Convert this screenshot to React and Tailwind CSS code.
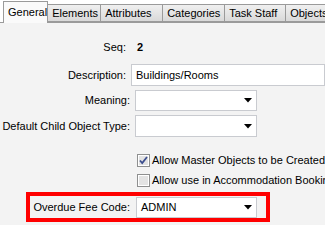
import React from "react";

const tabs = ["Elements", "Attributes", "Categories", "Task Staff", "Objects"];
const tabWidths = ["w-[53px]", "w-[62px]", "w-[62px]", "w-[61px]", "w-[50px]"];

function Arrow() {
  return (
    <svg width="8" height="5" viewBox="0 0 8 5" className="shrink-0">
      <path d="M0 0h8L4 4.5z" fill="#000" />
    </svg>
  );
}

function Select({ value, className }) {
  return (
    <div
      className={`flex h-full items-center justify-between border border-[#c9cbd0] bg-white pl-[4px] pr-[4px] ${className}`}
    >
      <span>{value}</span>
      <Arrow />
    </div>
  );
}

function Checkbox({ checked }) {
  return (
    <svg width="13" height="13" viewBox="0 0 13 13" className="shrink-0">
      <rect x="0.5" y="0.5" width="12" height="12" fill="#fff" stroke="#8e8f8f" />
      <rect x="2" y="2" width="9" height="9" fill="#e3e3e3" />
      {checked && (
        <path d="M3 6.5l2.2 2.5L10 3" fill="none" stroke="#3d4f8f" strokeWidth="1.8" />
      )}
    </svg>
  );
}

export default function App() {
  return (
    <div className="relative h-[225px] w-[325px] overflow-hidden bg-white text-[11px] leading-none text-black [font-family:'Liberation_Sans',Arial,sans-serif]">
      {/* tab strip */}
      <div className="flex h-[22px] items-end pl-[3px]">
        <div className="z-10 -mb-px flex h-[22px] w-[49px] items-start border border-b-0 border-[#9a9a9a] bg-[#fafafa] pl-[4px] pt-[5px]">
          General
        </div>
        {tabs.map((t, i) => (
          <div
            key={t}
            className={`flex h-[18px] shrink-0 items-center border border-l-0 border-[#9a9a9a] bg-gradient-to-b from-[#f0f0f0] to-[#d9d9d9] pl-[4px] ${tabWidths[i]}`}
          >
            <span className="whitespace-nowrap">{t}</span>
          </div>
        ))}
      </div>

      {/* content */}
      <div className="h-[203px] border-t border-[#9a9a9a] bg-[#f3f3f3] pt-[17px]">
        <div className="flex h-[14px] items-center">
          <span className="w-[126px] text-right">Seq:</span>
          <span className="ml-[11px] font-bold">2</span>
        </div>

        <div className="mt-[10px] flex h-[22px] items-center">
          <span className="w-[130px] text-right">Description:</span>
          <div className="ml-[5px] flex h-full w-[200px] items-center border border-[#c9cbd0] bg-white pl-[4px]">
            Buildings/Rooms
          </div>
        </div>

        <div className="mt-[4px] flex h-[21px] items-center">
          <span className="w-[130px] text-right">Meaning:</span>
          <Select value="" className="ml-[5px] w-[122px]" />
        </div>

        <div className="mt-[4px] flex h-[22px] items-center">
          <span className="w-[130px] whitespace-nowrap text-right">Default Child Object Type:</span>
          <Select value="" className="ml-[5px] w-[122px]" />
        </div>

        <div className="ml-[137px] mt-[17px] flex h-[13px] items-center gap-[2px] whitespace-nowrap">
          <Checkbox checked />
          <span>Allow Master Objects to be Created</span>
        </div>
        <div className="ml-[137px] mt-[7px] flex h-[13px] items-center gap-[2px] whitespace-nowrap">
          <Checkbox />
          <span>Allow use in Accommodation Booking</span>
        </div>

        <div className="ml-[26px] mt-[5px] flex h-[30px] w-[244px] items-center border-[4px] border-[#ff0000]">
          <span className="w-[100px] text-right">Overdue Fee Code:</span>
          <div className="ml-[6px] h-[21px] w-[121px]">
            <Select value="ADMIN" className="w-full" />
          </div>
        </div>
      </div>
    </div>
  );
}
